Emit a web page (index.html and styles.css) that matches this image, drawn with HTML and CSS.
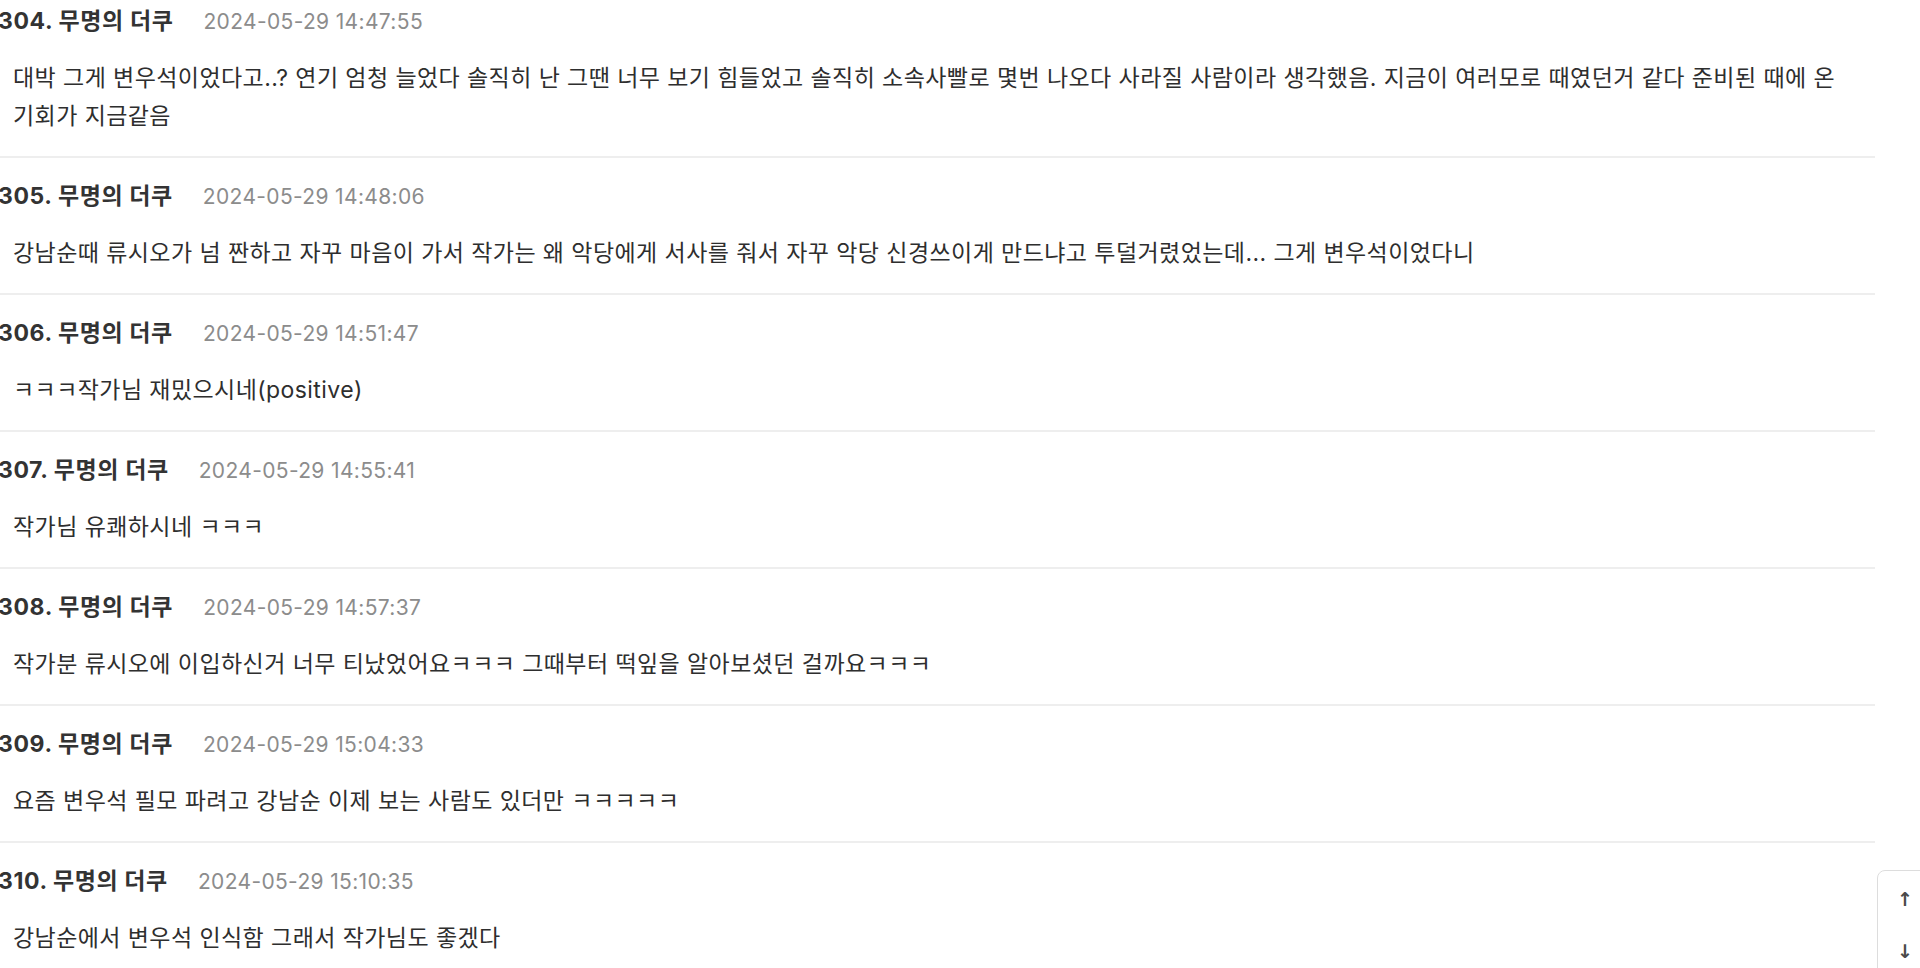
FILE: index.html
```html
<!DOCTYPE html>
<html lang="ko">
<head>
<meta charset="utf-8">
<title>댓글</title>
<link rel="stylesheet" href="styles.css">
</head>
<body>
<div class="comments">
  <div class="comment">
    <div class="meta"><span class="author">304. 무명의 더쿠</span><span class="date">2024-05-29 14:47:55</span></div>
    <p class="text">대박 그게 변우석이었다고..? 연기 엄청 늘었다 솔직히 난 그땐 너무 보기 힘들었고 솔직히 소속사빨로 몇번 나오다 사라질 사람이라 생각했음. 지금이 여러모로 때였던거 같다 준비된 때에 온 기회가 지금같음</p>
  </div>
  <div class="comment">
    <div class="meta"><span class="author">305. 무명의 더쿠</span><span class="date">2024-05-29 14:48:06</span></div>
    <p class="text">강남순때 류시오가 넘 짠하고 자꾸 마음이 가서 작가는 왜 악당에게 서사를 줘서 자꾸 악당 신경쓰이게 만드냐고 투덜거렸었는데... 그게 변우석이었다니</p>
  </div>
  <div class="comment">
    <div class="meta"><span class="author">306. 무명의 더쿠</span><span class="date">2024-05-29 14:51:47</span></div>
    <p class="text">ㅋㅋㅋ작가님 재밌으시네(positive)</p>
  </div>
  <div class="comment">
    <div class="meta"><span class="author">307. 무명의 더쿠</span><span class="date">2024-05-29 14:55:41</span></div>
    <p class="text">작가님 유쾌하시네 ㅋㅋㅋ</p>
  </div>
  <div class="comment">
    <div class="meta"><span class="author">308. 무명의 더쿠</span><span class="date">2024-05-29 14:57:37</span></div>
    <p class="text">작가분 류시오에 이입하신거 너무 티났었어요ㅋㅋㅋ 그때부터 떡잎을 알아보셨던 걸까요ㅋㅋㅋ</p>
  </div>
  <div class="comment">
    <div class="meta"><span class="author">309. 무명의 더쿠</span><span class="date">2024-05-29 15:04:33</span></div>
    <p class="text">요즘 변우석 필모 파려고 강남순 이제 보는 사람도 있더만 ㅋㅋㅋㅋㅋ</p>
  </div>
  <div class="comment">
    <div class="meta"><span class="author">310. 무명의 더쿠</span><span class="date">2024-05-29 15:10:35</span></div>
    <p class="text">강남순에서 변우석 인식함 그래서 작가님도 좋겠다</p>
  </div>
</div>
<div class="scroll-nav">
  <span class="arrow">&#8593;</span>
  <span class="arrow">&#8595;</span>
</div>
</body>
</html>
```

FILE: styles.css
```css
html, body {
  margin: 0;
  padding: 0;
  background: #ffffff;
  overflow: hidden;
}

body {
  font-family: "Inter", "Noto Sans CJK KR", sans-serif;
  color: #333333;
}

.comments {
  margin-top: -17px;
  margin-left: -2px;
  width: 1877px;
}

.comment {
  padding: 22px 0 21px 0;
  border-bottom: 2px solid #eeeeee;
}

.meta {
  display: flex;
  align-items: baseline;
  gap: 30px;
  height: 32px;
  line-height: 32px;
}

.author {
  font-size: 23px;
  font-weight: 700;
  letter-spacing: 0.6px;
  color: #333333;
}

.date {
  font-size: 21px;
  font-weight: 400;
  letter-spacing: 0.35px;
  color: #8c8c8c;
}

.text {
  margin: 22px 0 0 0;
  padding-left: 15px;
  padding-right: 20px;
  font-size: 23px;
  letter-spacing: 0.42px;
  line-height: 38px;
  color: #2e2e2e;
}

.scroll-nav {
  position: fixed;
  left: 1877px;
  top: 870px;
  width: 56px;
  height: 130px;
  box-sizing: border-box;
  border: 1px solid #dddddd;
  border-radius: 8px;
  background: #ffffff;
  display: flex;
  flex-direction: column;
  align-items: center;
  padding-top: 13px;
  gap: 22px;
}

.arrow {
  font-family: "DejaVu Sans", sans-serif;
  font-size: 19px;
  font-weight: 700;
  color: #4a4a4a;
  line-height: 30px;
}
```
